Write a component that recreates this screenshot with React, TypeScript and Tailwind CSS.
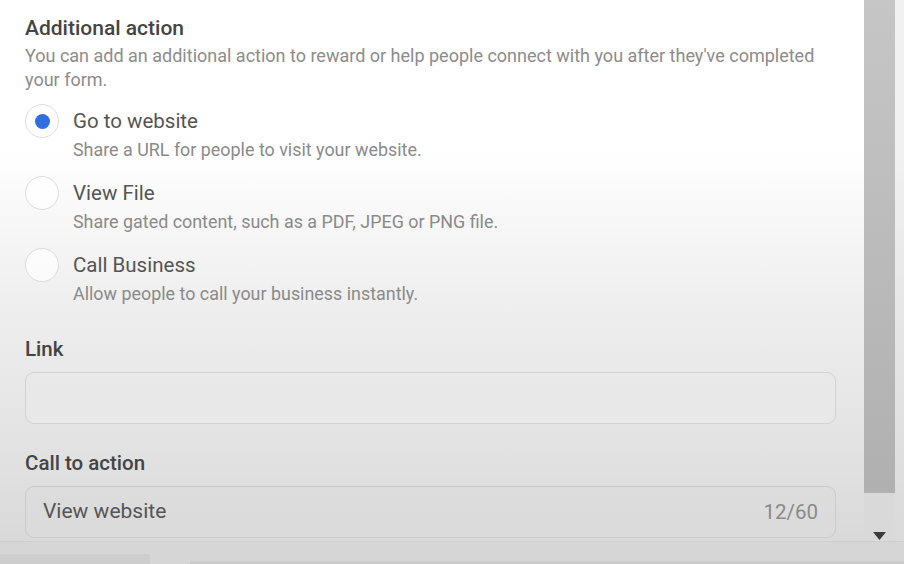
const options = [
  { label: "Go to website", hint: "Share a URL for people to visit your website.", checked: true },
  { label: "View File", hint: "Share gated content, such as a PDF, JPEG or PNG file.", checked: false },
  { label: "Call Business", hint: "Allow people to call your business instantly.", checked: false },
]

function Radio({ checked }: { checked: boolean }) {
  return (
    <div className="w-[34px] h-[34px] shrink-0 rounded-full border border-[#dcdcdc] bg-white/70 flex items-center justify-center">
      {checked && <div className="w-[15px] h-[15px] rounded-full bg-[#2f6fdf]" />}
    </div>
  )
}

export default function App() {
  return (
    <div
      className="w-[904px] h-[564px] overflow-hidden flex flex-col bg-[linear-gradient(to_bottom,#ffffff_0px,#ffffff_150px,#efefef_300px,#e4e4e4_430px,#d9d9d9_541px)]"
      style={{ fontFamily: "Roboto, 'Noto Sans', sans-serif" }}
    >
      <div className="flex flex-1 min-h-0">
        {/* Form */}
        <div className="w-[862px] pl-[25px] pr-[26px] pt-[15px]">
          <h2 className="text-[21px] leading-[26px] font-medium text-[#444]">Additional action</h2>
          <p className="mt-[3px] max-w-[800px] text-[18px] leading-[24px] text-[#8c8c8c]">
            You can add an additional action to reward or help people connect with you after they've completed your form.
          </p>

          <div className="mt-[12px] flex flex-col">
            {options.map((o) => (
              <div key={o.label} className="flex h-[72px]">
                <Radio checked={o.checked} />
                <div className="ml-[14px]">
                  <div className="text-[20.5px] leading-[34px] text-[#555]">{o.label}</div>
                  <div className="text-[17.9px] leading-[24px] text-[#8a8a8a]">{o.hint}</div>
                </div>
              </div>
            ))}
          </div>

          <div className="mt-[17px] text-[20.5px] leading-[24px] font-medium text-[#444]">Link</div>
          <div className="mt-[11px] h-[52px] rounded-[9px] border border-[#d2d2d2] bg-[#e9e9e9]/60" />

          <div className="mt-[27px] text-[20.5px] leading-[24px] font-medium text-[#444]">Call to action</div>
          <div className="mt-[11px] h-[52px] rounded-[9px] border border-[#cbcbcb] bg-[#dcdcdc]/50 flex items-center justify-between px-[17px]">
            <span className="text-[21px] text-[#555]">View website</span>
            <span className="text-[20.5px] text-[#8a8a8a]">12/60</span>
          </div>
        </div>

        {/* Scrollbar */}
        <div className="flex-1 flex">
          <div className="ml-[2px] w-[31px] flex flex-col">
            <div className="h-[493px] bg-[linear-gradient(to_bottom,#c6c6c6,#b0b0b0)]" />
            <div className="flex-1 bg-[#d9d9d9] flex items-end justify-center">
              <svg width="13" height="8" viewBox="0 0 13 8" className="mb-[1px]">
                <path d="M0 0h13L6.5 8z" fill="#3a3a3a" />
              </svg>
            </div>
          </div>
          <div className="flex-1 bg-[#dcdcdc]/40" />
        </div>
      </div>

      {/* Bottom strip */}
      <div className="h-[23px] bg-[#d6d6d6] border-t border-[#cfcfcf] flex items-end">
        <div className="w-[150px] h-[10px] bg-[#cdcdcd]" />
        <div className="ml-[40px] flex-1 h-[3px] bg-[#cbcbcb]" />
      </div>
    </div>
  )
}
